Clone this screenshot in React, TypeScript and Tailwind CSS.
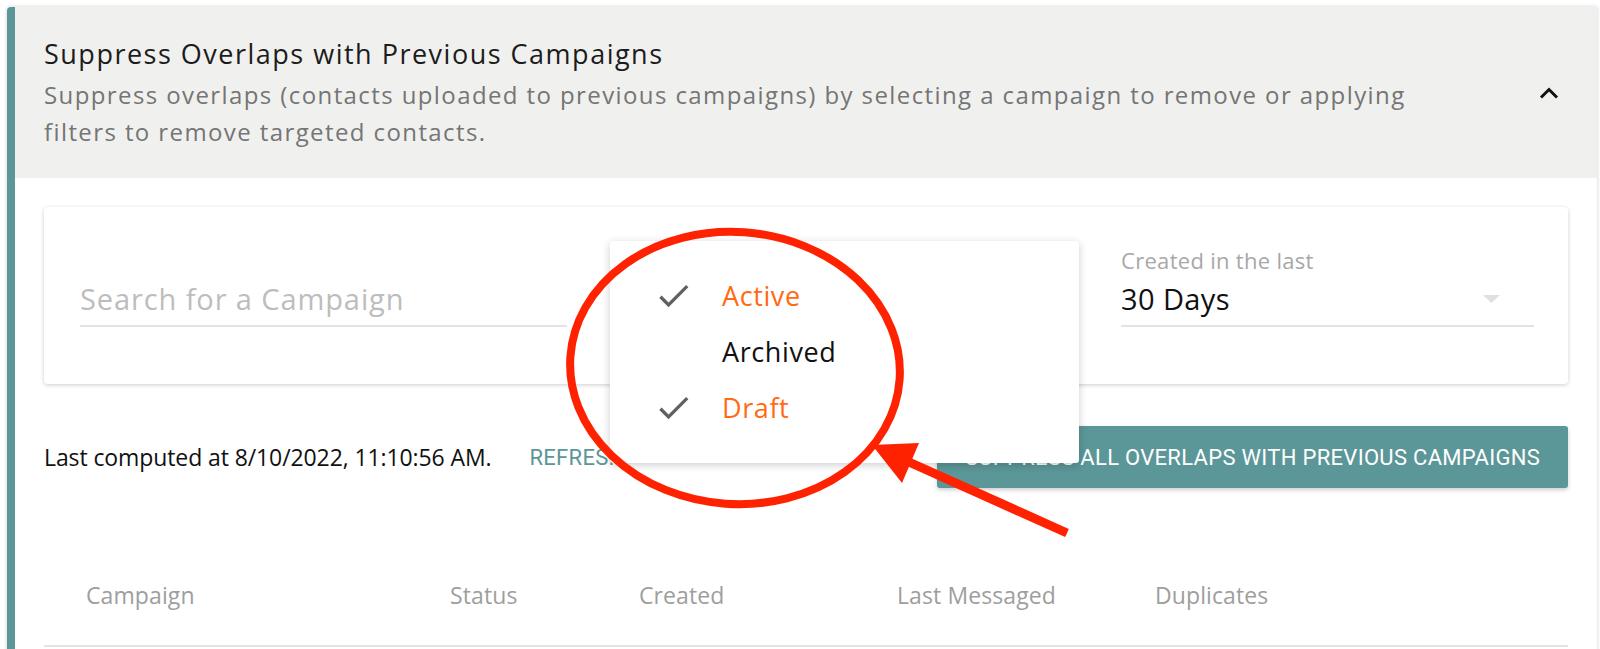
import React from 'react';

const font = { fontFamily: '"Open Sans", "DejaVu Sans", sans-serif' };

const CheckIcon: React.FC = () => (
  <svg viewBox="3 5 18 14.5" className="w-[31px] h-[24px] fill-[#616161]">
    <path d="M9 16.17L4.83 12l-1.42 1.41L9 19 21 7l-1.41-1.41z" />
  </svg>
);

const items = [
  { label: 'Active', checked: true },
  { label: 'Archived', checked: false },
  { label: 'Draft', checked: true },
];

const columns = [
  { label: 'Campaign', w: 'w-[364px]' },
  { label: 'Status', w: 'w-[189px]' },
  { label: 'Created', w: 'w-[258px]' },
  { label: 'Last Messaged', w: 'w-[258px]' },
  { label: 'Duplicates', w: 'w-[200px]' },
];

export default function App() {
  return (
    <div className="relative w-[1600px] h-[649px] overflow-hidden bg-white pt-[7px] pl-[7px] pr-[3px]" style={font}>
      <div className="h-[700px] rounded-l-[4px] border-l-[8px] border-[#5b9698] bg-white shadow-[0_0_4px_rgba(0,0,0,0.18)]">
        {/* header */}
        <div className="flex h-[171px] items-center justify-between bg-[#f0f1ef] pl-[29px] pr-[38px]">
          <div className="self-start pt-[29px]">
            <h2 className="text-[27px] leading-[36px] tracking-[1.5px] text-[#1c1c1c]">Suppress Overlaps with Previous Campaigns</h2>
            <p className="mt-[4px] text-[24px] leading-[37px] tracking-[1.4px] text-[#757575]">
              Suppress overlaps (contacts uploaded to previous campaigns) by selecting a campaign to remove or applying
              <br />
              filters to remove targeted contacts.
            </p>
          </div>
          <svg viewBox="0 0 20 12" className="h-[12px] w-[20px]">
            <path d="M2 10.5 10 2.5 18 10.5" fill="none" stroke="#111" strokeWidth="3" />
          </svg>
        </div>

        {/* body */}
        <div className="px-[29px] pt-[29px]">
          <div className="flex h-[177px] rounded-[4px] bg-white pl-[36px] pr-[34px] pt-[40px] shadow-[0_1px_4px_rgba(0,0,0,0.2)]">
            <div className="w-[487px]">
              <div className="h-[26px]" />
              <div className="flex h-[54px] items-center border-b-2 border-[#e3e3e3] text-[29px] tracking-[0.9px] text-[#bdbdbd]">
                Search for a Campaign
              </div>
            </div>
            <div className="flex-1" />
            <div className="w-[413px]">
              <div className="h-[26px] text-[22px] leading-[26px] tracking-[0.3px] text-[#a8a8a8]">Created in the last</div>
              <div className="flex h-[54px] items-center justify-between border-b-2 border-[#e3e3e3] pr-[34px] text-[29px] tracking-[0.4px] text-[#111]">
                <span>30 Days</span>
                <svg viewBox="0 0 17 8" className="h-[8px] w-[17px]">
                  <path d="M0 0h17L8.5 8z" fill="#e0e0e0" />
                </svg>
              </div>
            </div>
          </div>

          <div className="mt-[42px] flex h-[62px] items-center">
            <span className="text-[23px] tracking-[-0.1px] text-[#111]">Last computed at 8/10/2022, 11:10:56 AM.</span>
            <span className="ml-[38px] text-[22px] tracking-[0.3px] text-[#5b9698]" style={{ fontFamily: 'Roboto, sans-serif' }}>
              REFRESH
            </span>
            <button
              className="ml-auto flex h-[62px] w-[631px] items-center justify-center rounded-[3px] bg-[#5b9698] text-[22px] tracking-[0.3px] text-white shadow-[0_2px_4px_rgba(0,0,0,0.2)]"
              style={{ fontFamily: 'Roboto, sans-serif' }}
            >
              SUPPRESS ALL OVERLAPS WITH PREVIOUS CAMPAIGNS
            </button>
          </div>

          <div className="mt-[89px] flex h-[36px] items-center pl-[42px] text-[23px] tracking-[0.1px] text-[#9e9e9e]">
            {columns.map((c) => (
              <div key={c.label} className={c.w}>
                {c.label}
              </div>
            ))}
          </div>
          <div className="mt-[32px] border-t-2 border-[#e3e3e3]" />
        </div>
      </div>

      {/* status menu */}
      <div className="absolute left-[610px] top-[241px] w-[469px] rounded-[3px] bg-white py-[27px] shadow-[0_2px_8px_rgba(0,0,0,0.2)]">
        {items.map((it) => (
          <div key={it.label} className="flex h-[56px] items-center pl-[48px]">
            <div className="w-[31px]">{it.checked && <CheckIcon />}</div>
            <span className={`ml-[33px] text-[27px] tracking-[0.6px] ${it.checked ? 'text-[#ff6a13]' : 'text-[#111]'}`}>{it.label}</span>
          </div>
        ))}
      </div>

      {/* annotation */}
      <svg className="pointer-events-none absolute left-0 top-0" width="1600" height="649">
        <ellipse cx="735" cy="368" rx="165" ry="136" transform="rotate(4 735 368)" fill="none" stroke="#ff2200" strokeWidth="8" />
        <line x1="1067" y1="533" x2="900" y2="458" stroke="#ff2200" strokeWidth="9" />
        <polygon points="872,445 919,443 902,483" fill="#ff2200" />
      </svg>
    </div>
  );
}
